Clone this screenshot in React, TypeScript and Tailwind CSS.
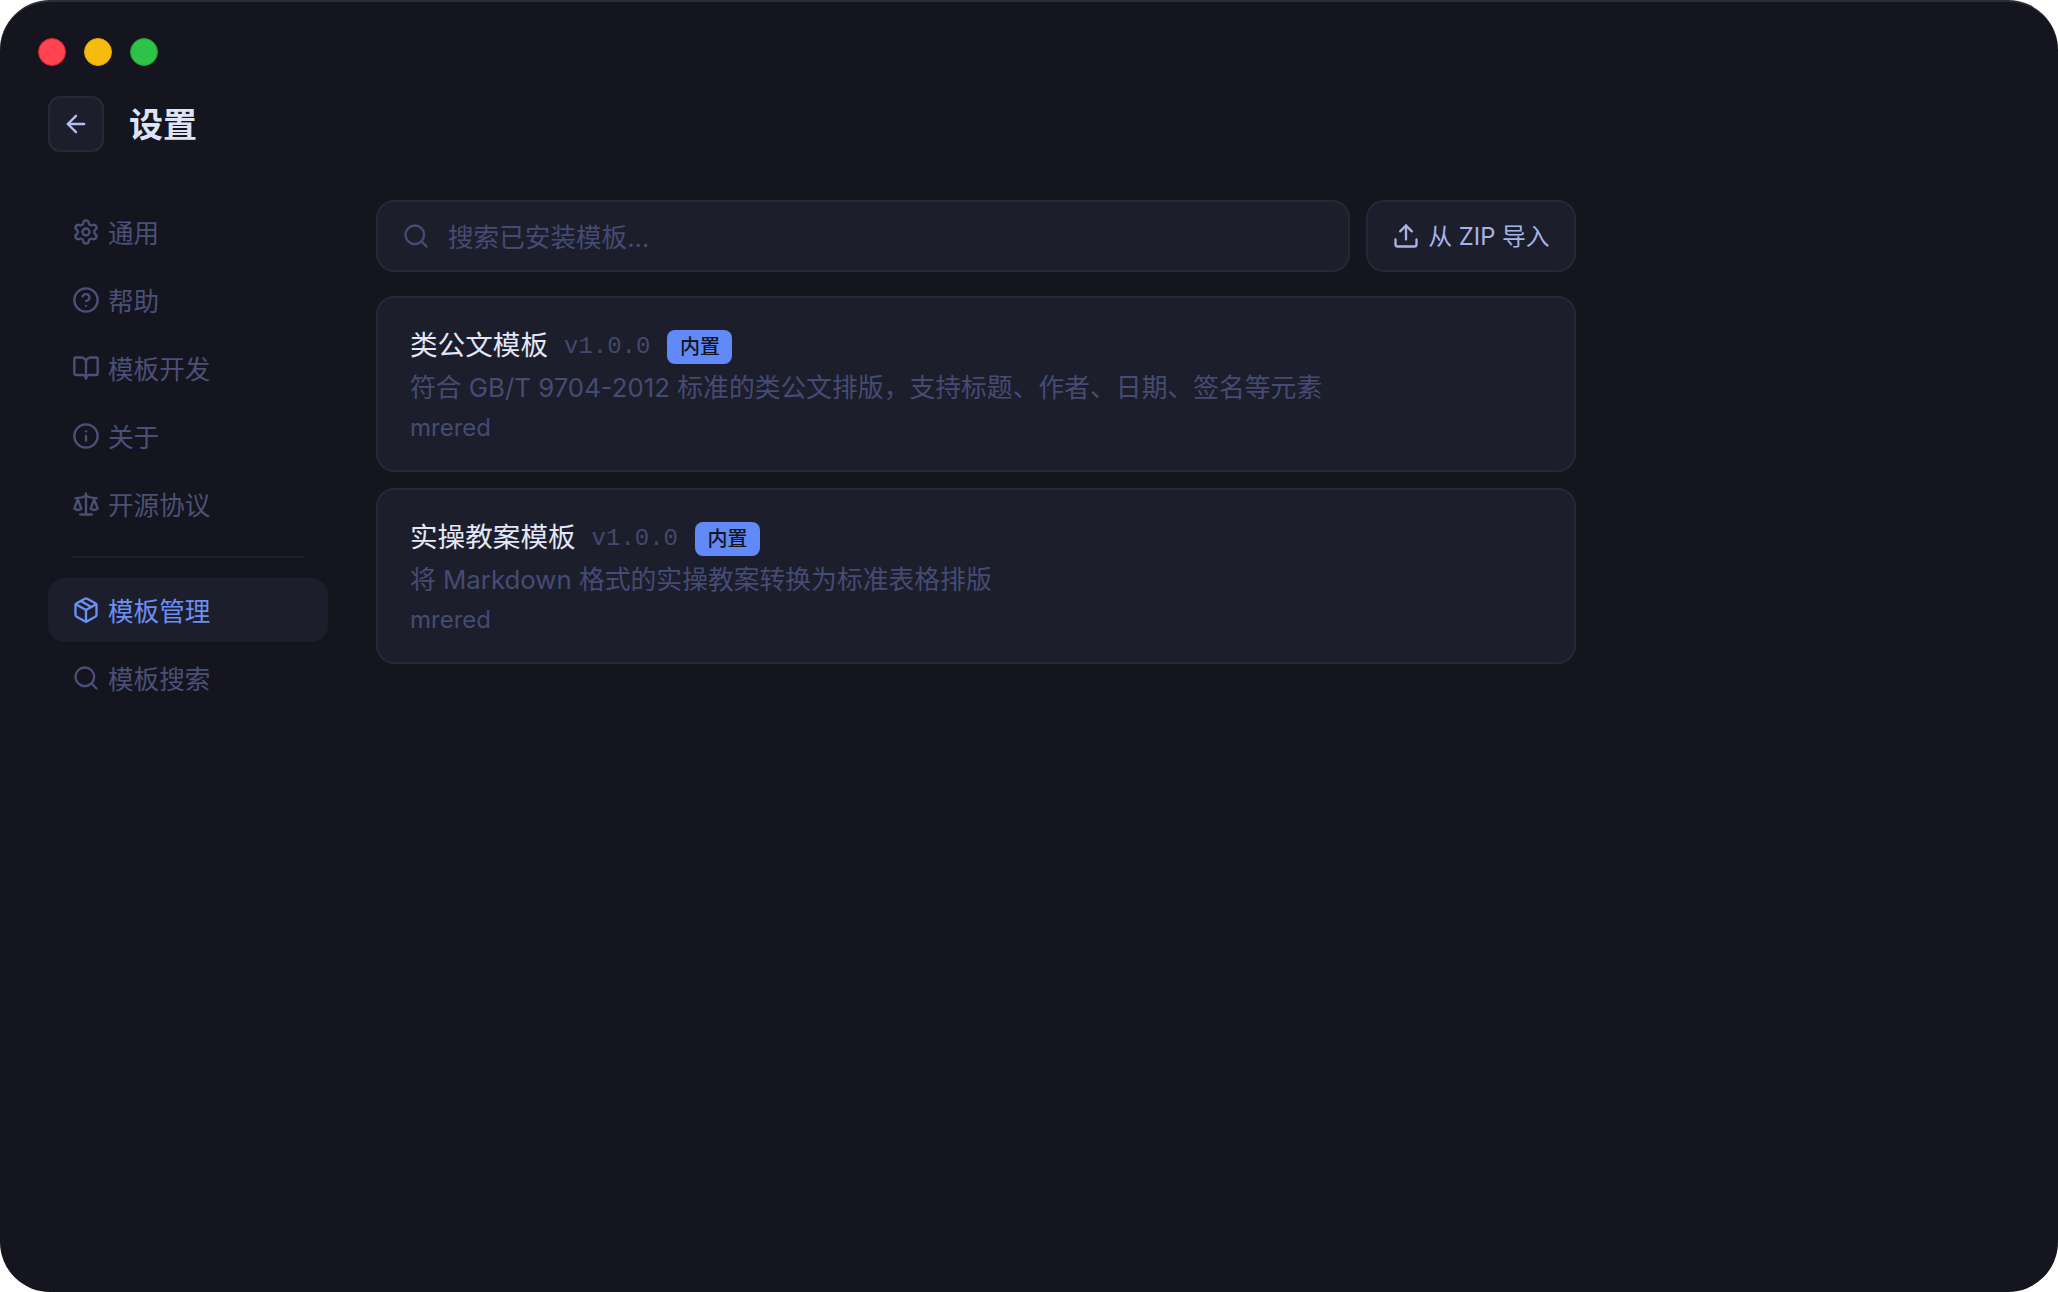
import { ArrowLeft, BookOpen, CircleHelp, Info, Package, Scale, Search, Settings, Upload } from 'lucide-react';
import type { LucideIcon } from 'lucide-react';

const FONT = "font-['Inter','Noto_Sans_CJK_SC',sans-serif]";

interface NavItemProps {
  icon: LucideIcon;
  label: string;
  active?: boolean;
}

function NavItem({ icon: Icon, label, active }: NavItemProps) {
  return (
    <div
      className={
        active
          ? 'flex h-16 items-center gap-2 rounded-2xl bg-[#1c1e2c] pl-6 text-[#6c8ff5]'
          : 'flex h-16 items-center gap-2 rounded-2xl pl-6 text-[#4b5079]'
      }
    >
      <Icon className="size-7 shrink-0" />
      <span className="pt-1 text-[25.6px] leading-none">{label}</span>
    </div>
  );
}

interface TemplateCardProps {
  name: string;
  version: string;
  description: string;
  author: string;
}

function TemplateCard({ name, version, description, author }: TemplateCardProps) {
  return (
    <div className="h-44 rounded-[18px] border-2 border-[#262836] bg-[#1c1e2c] px-8 pt-[27px]">
      <div className="flex h-[42px] items-center">
        <span className="text-[27.6px] leading-none text-[#e3e7f8]">{name}</span>
        <span className="mt-0.5 ml-4 font-['Liberation_Mono',monospace] text-2xl leading-none text-[#43486e]">{version}</span>
        <span className="mt-0.5 ml-[17px] flex h-[34px] w-[65px] items-center justify-center rounded-lg bg-[#6189f8] text-[20px] leading-none font-medium text-[#14151e]">
          内置
        </span>
      </div>
      <p className="text-[25.8px] leading-[41px] text-[#454b73]">{description}</p>
      <p className="text-2xl leading-[39px] text-[#454b73]">{author}</p>
    </div>
  );
}

export default function App() {
  return (
    <div className={`h-[1292px] w-[2058px] overflow-hidden bg-white ${FONT}`}>
      <div className="h-full rounded-[50px] border-t-2 border-[#2c2d36] bg-[#14151e] pl-12">
        <div className="flex gap-[18px] pt-9 -ml-2.5">
          <div className="size-7 rounded-full border border-[#e0202f] bg-[#ff4350]" />
          <div className="size-7 rounded-full border border-[#e5a800] bg-[#f6bc0d]" />
          <div className="size-7 rounded-full border border-[#16a32e] bg-[#2fc24a]" />
        </div>

        <div className="mt-[30px] flex items-center gap-[25px]">
          <div className="flex size-14 items-center justify-center rounded-xl border-2 border-[#262836] bg-[#1c1e2c] text-[#b4bef0]">
            <ArrowLeft className="size-7" />
          </div>
          <h1 className="pt-0.5 text-[34px] leading-none font-bold text-[#dfe3f6]">设置</h1>
        </div>

        <div className="mt-12 flex gap-12">
          <nav className="w-[280px] shrink-0">
            <div className="flex flex-col gap-1">
              <NavItem icon={Settings} label="通用" />
              <NavItem icon={CircleHelp} label="帮助" />
              <NavItem icon={BookOpen} label="模板开发" />
              <NavItem icon={Info} label="关于" />
              <NavItem icon={Scale} label="开源协议" />
            </div>
            <div className="mx-6 my-5 h-0.5 bg-[#1f2029]" />
            <div className="flex flex-col gap-1">
              <NavItem icon={Package} label="模板管理" active />
              <NavItem icon={Search} label="模板搜索" />
            </div>
          </nav>

          <main className="flex w-[1200px] flex-col gap-4">
            <div className="mb-2 flex gap-4">
              <div className="flex h-[72px] flex-1 items-center gap-[18px] rounded-[18px] border-2 border-[#262836] bg-[#1c1e2c] px-6 text-[#454b73]">
                <Search className="size-7 shrink-0" />
                <input
                  placeholder="搜索已安装模板..."
                  className="w-full bg-transparent pt-1 text-[25.6px] outline-none placeholder:text-[#454b73]"
                />
              </div>
              <button
                type="button"
                className="flex h-[72px] w-[210px] items-center justify-center gap-2 rounded-[18px] border-2 border-[#262836] bg-[#1c1e2c] text-[#a9b4e6]"
              >
                <Upload className="size-7" />
                <span className="pt-0.5 text-[23.8px]">从 ZIP 导入</span>
              </button>
            </div>
            <TemplateCard
              name="类公文模板"
              version="v1.0.0"
              description="符合 GB/T 9704-2012 标准的类公文排版，支持标题、作者、日期、签名等元素"
              author="mrered"
            />
            <TemplateCard
              name="实操教案模板"
              version="v1.0.0"
              description="将 Markdown 格式的实操教案转换为标准表格排版"
              author="mrered"
            />
          </main>
        </div>
      </div>
    </div>
  );
}
